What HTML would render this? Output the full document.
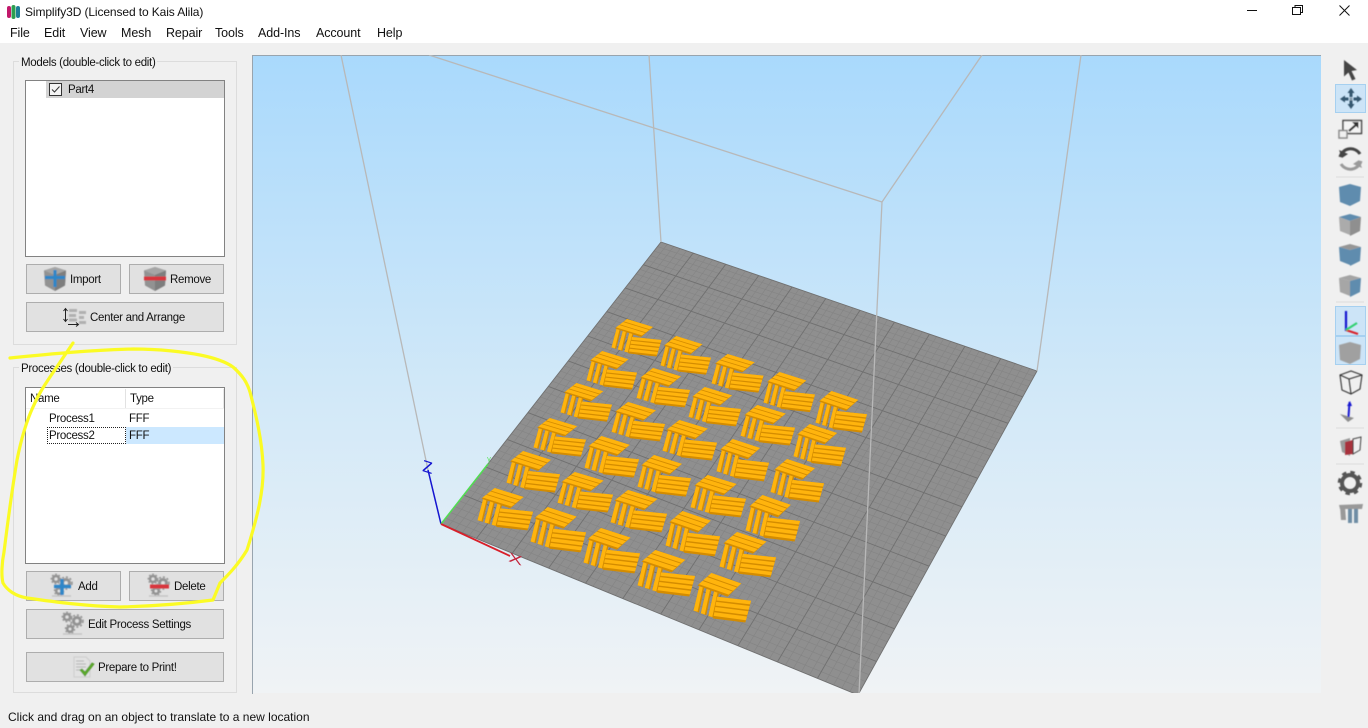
<!DOCTYPE html>
<html><head><meta charset="utf-8"><title>Simplify3D</title>
<style>
html,body{margin:0;padding:0;width:1368px;height:728px;overflow:hidden;background:#f0f0f0;font-family:"Liberation Sans",sans-serif;color:#111;}
.a{position:absolute;white-space:nowrap;}
.t{font-size:12px;line-height:14px;}
.lg{font-size:11.5px;letter-spacing:-.3px;line-height:16px;}
.m{font-size:12.5px;line-height:16px;top:25px;letter-spacing:-.1px;}
.g{position:absolute;border:1px solid #dcdcdc;box-sizing:border-box;}
.l{position:absolute;background:#fff;border:1px solid #828282;box-sizing:border-box;}
.b{position:absolute;background:#e1e1e1;border:1px solid #adadad;box-sizing:border-box;font-size:11.5px;letter-spacing:-.3px;line-height:31px;}
.b span{position:absolute;white-space:nowrap;}
svg{position:absolute;overflow:visible;}
</style></head><body>
<div class="a" style="left:0;top:0;width:1368px;height:43px;background:#fff"></div>
<svg style="left:6px;top:4px" width="16" height="16" viewBox="0 0 16 16"><rect x="1" y="2" width="4" height="12" rx="2" fill="#c2186b"/><rect x="5.500" y="1" width="4" height="14" rx="2" fill="#2e9e50"/><rect x="10" y="2" width="4" height="12" rx="2" fill="#1c7f96"/></svg>
<div class="a t" style="left:25px;top:5px;letter-spacing:-.11px">Simplify3D (Licensed to Kais Alila)</div>
<div class="a m" style="left:10px">File</div>
<div class="a m" style="left:44px">Edit</div>
<div class="a m" style="left:80px">View</div>
<div class="a m" style="left:121px">Mesh</div>
<div class="a m" style="left:166px">Repair</div>
<div class="a m" style="left:215px">Tools</div>
<div class="a m" style="left:258px">Add-Ins</div>
<div class="a m" style="left:316px">Account</div>
<div class="a m" style="left:377px">Help</div>
<svg style="left:1240px;top:0" width="128" height="20"><path d="M7 10.500H17" stroke="#111" fill="none"/><path d="M52.500 7.500h8v7h-8zM55 7.500V5.500h7.500v7h-2" stroke="#111" fill="none"/><path d="M99.500 5.500l10 10M109.500 5.500l-10 10" stroke="#111" fill="none"/></svg>

<!-- Models -->
<div class="g" style="left:13px;top:61px;width:224px;height:284px"></div>
<div class="a lg" style="left:19px;top:55px;background:#f0f0f0;padding:0 2px;">Models (double-click to edit)</div>
<div class="l" style="left:25px;top:80px;width:200px;height:177px"></div>
<div class="a" style="left:46px;top:81px;width:178px;height:17px;background:#d3d3d3"></div>
<div class="a" style="left:49px;top:83px;width:11px;height:11px;border:1px solid #333;background:#f4f4f4"></div>
<svg style="left:49px;top:83px" width="13" height="13"><path d="M3 6.500l2.500 2.500 5-5.500" stroke="#333" fill="none"/></svg>
<div class="a lg" style="left:68px;top:82px;">Part4</div>

<svg width="0" height="0" style="left:0;top:0"><defs>
<filter id="bl" x="-10%" y="-10%" width="120%" height="120%"><feGaussianBlur stdDeviation=".4"/></filter>
<g id="cube"><path d="M0 3.500L11 0l11 3.500-1 15L11 24 1 18.500z" fill="#929292"/><path d="M0 3.500L11 0l11 3.500L11 8z" fill="#a6a6a6"/><path d="M11 8l11-4.500-1 15L11 24z" fill="#7e7e7e"/></g>
<g id="gears" fill="none" stroke="#939393"><circle cx="5" cy="5" r="3" stroke-width="2.500"/><circle cx="5" cy="5" r="4.800" stroke-width="1.200" stroke-dasharray="1.800 1.800"/><circle cx="15" cy="9" r="3.500" stroke-width="3"/><circle cx="15" cy="9" r="6" stroke-width="1.500" stroke-dasharray="2 2"/><circle cx="8" cy="17" r="2.800" stroke-width="2.500"/><circle cx="8" cy="17" r="4.600" stroke-width="1.200" stroke-dasharray="1.800 1.800"/><path d="M1 22H20" stroke="#c4c4c4" stroke-width="1.500"/></g>
</defs></svg>

<div class="b" style="left:26px;top:264px;width:95px;height:30px"><span style="left:43px;">Import</span></div>
<svg style="left:44px;top:267px" width="24" height="24"><g filter="url(#bl)"><use href="#cube"/><path d="M11 3v17M1 10.500h20" stroke="#2e86c8" stroke-width="3.200" fill="none"/></g></svg>
<div class="b" style="left:129px;top:264px;width:95px;height:30px"><span style="left:40px;">Remove</span></div>
<svg style="left:144px;top:267px" width="24" height="24"><g filter="url(#bl)"><use href="#cube"/><path d="M0 11.500H22" stroke="#d8343c" stroke-width="4" fill="none"/></g></svg>
<div class="b" style="left:26px;top:302px;width:198px;height:30px"><span style="left:63px;">Center and Arrange</span></div>
<svg style="left:62px;top:308px" width="26" height="19"><path d="M3.500 1v12M1.500 3l2-2.500 2 2.500M1.500 11l2 2.500 2-2.500M6 16.500h10M14 14.500l2.500 2-2.500 2" stroke="#222" fill="none"/><path d="M7 1h8v3H7zM7 6h7v3H7zM7 10.500h8v3H7zM17 3h7v3h-7zM17 8h5v3h-5zM17 13h7v3h-7z" fill="#b0b0b0" filter="url(#bl)"/></svg>

<!-- Processes -->
<div class="g" style="left:13px;top:367px;width:224px;height:326px"></div>
<div class="a lg" style="left:19px;top:361px;background:#f0f0f0;padding:0 2px;">Processes (double-click to edit)</div>
<div class="l" style="left:25px;top:387px;width:200px;height:177px"></div>
<div class="a" style="left:125px;top:389px;width:1px;height:19px;background:#e2e2e2"></div>
<div class="a" style="left:223px;top:389px;width:1px;height:19px;background:#e8e8e8"></div>
<div class="a" style="left:26px;top:408px;width:198px;height:1px;background:#f2f2f2"></div>
<div class="a lg" style="left:30px;top:391px;">Name</div>
<div class="a lg" style="left:130px;top:391px;">Type</div>
<div class="a lg" style="left:49px;top:411px;">Process1</div>
<div class="a lg" style="left:129px;top:411px;">FFF</div>
<div class="a" style="left:126px;top:427px;width:98px;height:17px;background:#cce8ff"></div>
<div class="a" style="left:47px;top:427px;width:77px;height:15px;border:1px dotted #222"></div>
<div class="a lg" style="left:49px;top:428px;">Process2</div>
<div class="a lg" style="left:129px;top:428px;">FFF</div>

<div class="b" style="left:26px;top:571px;width:95px;height:30px"><span style="left:51px;">Add</span></div>
<svg style="left:51px;top:574px" width="24" height="24"><g filter="url(#bl)"><use href="#gears"/><path d="M11 5v16M3 12.500h17" stroke="#2e86c8" stroke-width="3.500" fill="none"/></g></svg>
<div class="b" style="left:129px;top:571px;width:95px;height:30px"><span style="left:44px;">Delete</span></div>
<svg style="left:148px;top:574px" width="24" height="24"><g filter="url(#bl)"><use href="#gears"/><path d="M2 12.500h19" stroke="#d8343c" stroke-width="4" fill="none"/></g></svg>
<div class="b" style="left:26px;top:609px;width:198px;height:30px"><span style="left:61px;">Edit Process Settings</span></div>
<svg style="left:62px;top:612px" width="24" height="24"><g filter="url(#bl)"><use href="#gears"/></g></svg>
<div class="b" style="left:26px;top:652px;width:198px;height:30px"><span style="left:71px;">Prepare to Print!</span></div>
<svg style="left:73px;top:656px" width="24" height="24"><g filter="url(#bl)"><path d="M1 1h12l4 4v16H1z" fill="#e2e2e2" stroke="#cccccc"/><path d="M3 5h8M3 8h10M3 11h10M3 14h7" stroke="#b4b4b4"/><path d="M7 14l5 6 9-12-2-1-7 9-3-3z" fill="#5fae2c" stroke="#4b9322" stroke-width=".8"/></g></svg>

<div class="a" style="left:8px;top:710px;font-size:12px;line-height:15px;">Click and drag on an object to translate to a new location</div>

<!-- viewport -->
<svg style="left:0;top:0" width="1368" height="728" viewBox="0 0 1368 728">
<defs>
<linearGradient id="sky" x1="0" y1="0" x2="0" y2="1"><stop offset="0" stop-color="#a9d9fc"/><stop offset=".55" stop-color="#d3e9f8"/><stop offset="1" stop-color="#f0f3f5"/></linearGradient>
<clipPath id="vp"><rect x="253" y="55" width="1068" height="638"/></clipPath>
<g id="part">
<path d="M16 0L42 8 30 18 4 9.500z" fill="#d48c00"/>
<path d="M16 0L42 8 38.800 10.400 12.800 2.400zM12.100 3L38.100 11 34.900 13.400 8.900 5.400zM8.200 6L34.200 14 31 16.400 5 8.400z" fill="#ffb40d"/>
<path d="M5.500 10l4.200 1.300L5.200 30 .5 28.500zM11.800 12l4.200 1.300L11.500 32 6.800 30.500zM18.300 14l4.200 1.300L18 34 13.300 32.500z" fill="#d48c00"/>
<path d="M5.500 10l3 .9L4 29.300 .5 28.500zM11.800 12l3 .9L10.300 31.300 6.800 30.500zM18.300 14l3 .9L16.800 33.300 13.300 32.500z" fill="#ffb40d"/>
<path d="M21 18L50.500 21 45.500 37.500 17.500 34.500z" fill="#d48c00"/>
<path d="M21 18L50.500 21 49.700 23.800 20.300 20.800zM20.200 21.900L49.300 25 48.500 27.800 19.500 24.700zM19.400 25.800L48.100 29 47.300 31.800 18.700 28.600zM18.600 29.700L46.900 33 46.100 35.800 17.900 32.500z" fill="#ffb40d"/>
</g>
</defs>
<rect x="253" y="55" width="1068" height="638" fill="url(#sky)"/>
<path d="M252.500 694V55.500H1321" stroke="#98a4ae" fill="none"/>
<g clip-path="url(#vp)">
<polygon points="441,524 661,242 1037,371 858,695" fill="#8f8f8f"/>
<g id="grid" fill="none"></g>
<g stroke="#b8b8b8" stroke-width="1.300" fill="none">
<path d="M428 470L341 55M661 242L649 55M1037 371L1081 55M859 694L882 202M882 202L429 55M882 202L982 55"/>
</g>
<path d="M441 524L428 470" stroke="#1414d0" stroke-width="1.500"/>
<path d="M441 524L488 464" stroke="#50e050" stroke-width="1.500"/>
<path d="M441 524L510 556" stroke="#d8202a" stroke-width="1.800"/>
</g>
<text x="0" y="0" transform="matrix(1.100 .35 -.1 1.100 422 471)" font-size="15" fill="#1414d0" font-family="Liberation Sans">Z</text>
<text x="0" y="0" transform="matrix(1.300 .45 -.1 .8 508 561)" font-size="16" fill="#c4243a" font-family="Liberation Sans">X</text>
<text x="0" y="0" transform="matrix(.6 0 0 1 487 464)" font-size="10" fill="#50e050" font-family="Liberation Sans">Y</text>

<!-- parts -->
<use href="#part" transform="matrix(1 0 0 1 611 319)"/>
<use href="#part" transform="matrix(1.010 0 0 1.030 660 336)"/>
<use href="#part" transform="matrix(1.040 0 0 1.030 711 354)"/>
<use href="#part" transform="matrix(1.030 0 0 1.070 763 372)"/>
<use href="#part" transform="matrix(1.030 0 0 1.110 815 391)"/>
<use href="#part" transform="matrix(1.010 0 0 1.030 586 351)"/>
<use href="#part" transform="matrix(1.070 0 0 1.050 636 368)"/>
<use href="#part" transform="matrix(1.050 0 0 1.050 688 387)"/>
<use href="#part" transform="matrix(1.090 0 0 1.080 740 405)"/>
<use href="#part" transform="matrix(1.050 0 0 1.130 793 424)"/>
<use href="#part" transform="matrix(1.030 0 0 1.030 560 383)"/>
<use href="#part" transform="matrix(1.070 0 0 1.050 611 402)"/>
<use href="#part" transform="matrix(1.090 0 0 1.080 662 420)"/>
<use href="#part" transform="matrix(1.050 0 0 1.130 716 439)"/>
<use href="#part" transform="matrix(1.070 0 0 1.160 770 459)"/>
<use href="#part" transform="matrix(1.050 0 0 1.030 533 418)"/>
<use href="#part" transform="matrix(1.090 0 0 1.110 584 436)"/>
<use href="#part" transform="matrix(1.070 0 0 1.110 637 455)"/>
<use href="#part" transform="matrix(1.110 0 0 1.130 690 475)"/>
<use href="#part" transform="matrix(1.090 0 0 1.240 745 495)"/>
<use href="#part" transform="matrix(1.070 0 0 1.110 506 451)"/>
<use href="#part" transform="matrix(1.110 0 0 1.080 557 472)"/>
<use href="#part" transform="matrix(1.130 0 0 1.130 610 490)"/>
<use href="#part" transform="matrix(1.090 0 0 1.210 665 511)"/>
<use href="#part" transform="matrix(1.130 0 0 1.210 719 532)"/>
<use href="#part" transform="matrix(1.110 0 0 1.130 477 488)"/>
<use href="#part" transform="matrix(1.110 0 0 1.210 530 507)"/>
<use href="#part" transform="matrix(1.130 0 0 1.210 583 528)"/>
<use href="#part" transform="matrix(1.150 0 0 1.240 637 550)"/>
<use href="#part" transform="matrix(1.150 0 0 1.320 693 573)"/>

<!-- annotation -->
<g fill="none" stroke="#fbfb24" stroke-width="3.200" stroke-linecap="round" stroke-linejoin="round">
<path d="M10 358C50 354 90 350 133 349C160 349 185 352 200 355C215 358 226 362 233 367C242 375 247 382 250 392C256 415 262 440 263 465C264 490 258 515 247 550C238 565 228 575 220 583L213 600C190 603 160 606 120 607C85 606 55 602 27 598C15 596 7 590 3 583C1 575 2 562 4 552C8 520 12 490 17 460C22 435 27 420 33 407C38 395 44 386 50 377L73 343"/>
</g>

<!-- right toolbar -->
<g fill="#f0f0f0"><rect x="1322" y="44" width="46" height="650"/></g>
<rect x="1335.500" y="84.500" width="30" height="28" fill="#cce4f7" stroke="#a6d0f0"/>
<rect x="1335.500" y="306.500" width="30" height="29" fill="#cce4f7" stroke="#a6d0f0"/>
<rect x="1335.500" y="336.500" width="30" height="28" fill="#cce4f7" stroke="#a6d0f0"/>
<g filter="url(#bl)">
<path d="M1344 60l13 10-5.500 1 4 8-3.500 1.500-3.500-8-4.500 4z" fill="#444"/>
<path d="M1351 88l3.500 5h-2v4h-3v-4h-2zM1351 109l3.500-5h-2v-3.500h-3v3.500h-2zM1340 99l5-3.500v2h3.500v3h-3.500v2zM1362 99l-5-3.500v2h-3.500v3h3.500v2z" fill="#36566e"/>
<rect x="1349.500" y="97.500" width="3" height="3" fill="#8aa0b0"/>
<rect x="1343" y="120.500" width="18.500" height="13" fill="#f4f4f4" stroke="#444" stroke-width="1.500"/>
<rect x="1339" y="130.500" width="8" height="7.500" fill="#f0f0f0" stroke="#8a8a8a" stroke-width="1.500"/>
<path d="M1349 131l8-7" stroke="#333" stroke-width="2.200" fill="none"/><path d="M1352 122h6.500v6.500z" fill="#333"/>
<path d="M1340 157a11 11 0 0 1 20-3" fill="none" stroke="#444" stroke-width="3"/>
<path d="M1339 150l3 8 6-4z" fill="#444"/>
<path d="M1361 161a11 11 0 0 1-20 3" fill="none" stroke="#9a9a9a" stroke-width="3"/>
<path d="M1362 168l-3-8-6 4z" fill="#9a9a9a"/>
<path d="M1339 187l11-3 11 3-1 14-10 5-10-4z" fill="#5f8cae"/>
<path d="M1339 217l11-3 11 3-11 4z" fill="#5f8cae"/><path d="M1339 217l11 4v14l-10-4z" fill="#ababab"/><path d="M1350 221l11-4-1 14-10 5z" fill="#8f8f8f"/>
<path d="M1339 247l11-3 11 3-11 3z" fill="#969696"/><path d="M1339 247l11 3v15l-10-4z" fill="#5f8cae"/><path d="M1350 250l11-3-1 14-10 5z" fill="#5f8cae"/>
<path d="M1339 278l11-3 11 3-11 3z" fill="#a4a4a4"/><path d="M1339 278l11 3v15l-10-4z" fill="#a6a6a6"/><path d="M1350 281l11-3-1 14-10 5z" fill="#5f8cae"/>
<path d="M1339 345l11-3 11 3-1 14-10 5-10-4z" fill="#a0a0a0"/>
<path d="M1346 311v20" stroke="#1414d0" stroke-width="2.200"/><path d="M1346 330l12 4" stroke="#d8202a" stroke-width="2.200"/><path d="M1346 330l11-7" stroke="#30d070" stroke-width="2.200"/>
<path d="M1340 375l11-4 11 4-2 14-9 5-9-4zM1340 375l9 4 13-4M1349 379l2 15" fill="none" stroke="#333" stroke-width="1.100"/>
<path d="M1340 414l14 4-6 4z" fill="#8e8e8e"/><path d="M1349.500 402l-1 15" stroke="#1414d0" stroke-width="2"/><path d="M1350 401l-3 5h5z" fill="#1414d0"/>
<path d="M1340 441l10-3v18l-8-4z" fill="#9a9a9a"/><path d="M1345 442l8-2v14l-8 1z" fill="#a8333c"/><path d="M1353 439l8-2-1 13-7 4z" fill="none" stroke="#444"/>
<circle cx="1350" cy="483" r="8" fill="none" stroke="#555" stroke-width="4"/><circle cx="1350" cy="483" r="11" fill="none" stroke="#555" stroke-width="2.500" stroke-dasharray="4.500 4.140"/>
<path d="M1339 505l24-1-1 5h-22z" fill="#999"/><path d="M1340 506h5l1 14h-5z" fill="#999"/><path d="M1348 509h4v14h-4z" fill="#6e8da5"/><path d="M1354 509h4v14h-4z" fill="#6e8da5"/>
</g>
<path d="M1336 177H1364M1336 302H1364M1336 428H1364M1336 464H1364" stroke="#dcdcdc"/>
</svg>
<script>
(function(){var P=[[441,524],[858,695],[1037,371],[661,242]];
var x0=P[0][0],y0=P[0][1],x1=P[1][0],y1=P[1][1],x2=P[2][0],y2=P[2][1],x3=P[3][0],y3=P[3][1];
var dx1=x1-x2,dx2=x3-x2,dx3=x0-x1+x2-x3,dy1=y1-y2,dy2=y3-y2,dy3=y0-y1+y2-y3;
var d=dx1*dy2-dx2*dy1,g=(dx3*dy2-dx2*dy3)/d,h=(dx1*dy3-dx3*dy1)/d;
var a=x1-x0+g*x1,b=x3-x0+h*x3,c=x0,e=y1-y0+g*y1,f=y3-y0+h*y3,k=y0;
function m(u,v){var w=g*u+h*v+1;return ((a*u+b*v+c)/w).toFixed(1)+' '+((e*u+f*v+k)/w).toFixed(1);}
var N=55,fine='',maj='';for(var i=0;i<=N;i++){var s='M'+m(i/N,0)+'L'+m(i/N,1)+'M'+m(0,i/N)+'L'+m(1,i/N);if(i%5==0)maj+=s;else fine+=s;}
document.getElementById('grid').innerHTML='<path d="'+fine+'" stroke="#848484" stroke-width=".6"/><path d="'+maj+'" stroke="#707070" stroke-width=".9"/>';
})();
</script>
</body></html>
